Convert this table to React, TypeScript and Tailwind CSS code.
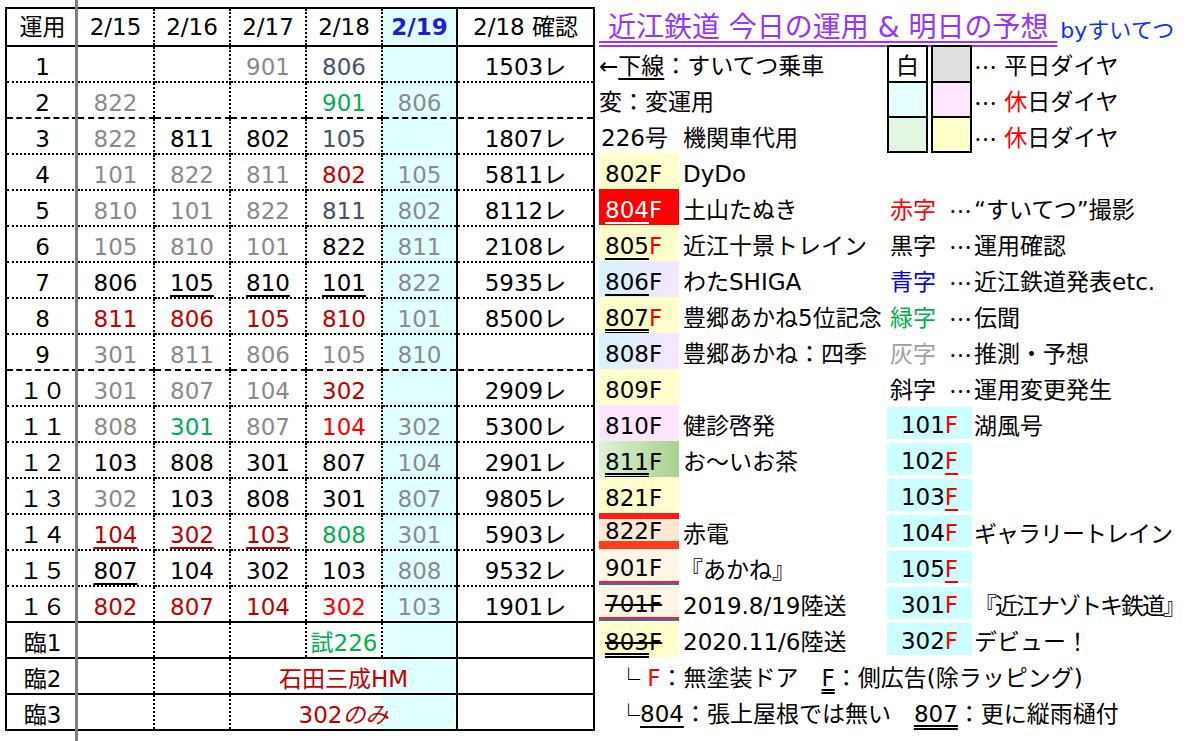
import React from "react";

const JP = "font-['Noto_Sans_CJK_JP',sans-serif]";

const tone: Record<string, string> = {
  g: "text-[#8a8a8a]",
  s: "text-[#44546a]",
  k: "text-black",
  r: "text-[#c00000]",
  R: "text-[#ff0000]",
  n: "text-[#00b050]",
};

// value + colour key + optional underline key (u: black, x: red)
const rows: [string, string[], string][] = [
  ["1", ["", "", "901g", "806s", ""], "1503レ"],
  ["2", ["822g", "", "", "901n", "806g"], ""],
  ["3", ["822g", "811k", "802k", "105s", ""], "1807レ"],
  ["4", ["101g", "822g", "811g", "802r", "105g"], "5811レ"],
  ["5", ["810g", "101g", "822g", "811s", "802g"], "8112レ"],
  ["6", ["105g", "810g", "101g", "822k", "811g"], "2108レ"],
  ["7", ["806k", "105ku", "810ku", "101ku", "822g"], "5935レ"],
  ["8", ["811r", "806r", "105r", "810r", "101g"], "8500レ"],
  ["9", ["301g", "811g", "806g", "105g", "810g"], ""],
  ["１０", ["301g", "807g", "104g", "302r", ""], "2909レ"],
  ["１１", ["808g", "301n", "807g", "104R", "302g"], "5300レ"],
  ["１２", ["103k", "808k", "301k", "807k", "104g"], "2901レ"],
  ["１３", ["302g", "103k", "808k", "301k", "807g"], "9805レ"],
  ["１４", ["104rx", "302rx", "103rx", "808n", "301g"], "5903レ"],
  ["１５", ["807ku", "104k", "302k", "103k", "808g"], "9532レ"],
  ["１６", ["802r", "807r", "104r", "302R", "103g"], "1901レ"],
];

const DOT_R = "border-r-2 border-r-black [border-right-style:dotted]";
const SOL_R = "border-r-2 border-r-black";
const SOL_B = "border-b-2 border-b-black";
const CYAN = "bg-[#e0ffff]";
const TD = "pt-[6px] text-center";

const bottomOf = (i: number) =>
  i === 1 || i === 8
    ? "border-b-2 border-b-black [border-bottom-style:dashed]"
    : i === 15
      ? SOL_B
      : "border-b-2 border-b-black [border-bottom-style:dotted]";

function Num({ code }: { code: string }) {
  if (!code) return null;
  const v = code.slice(0, 3);
  const u = code[4];
  const line =
    u === "u"
      ? "underline decoration-2 underline-offset-[4px] decoration-black"
      : u === "x"
        ? "underline decoration-2 underline-offset-[4px] decoration-[#c00000]"
        : "";
  return <span className={`${tone[code[3]]} ${line}`}>{v}</span>;
}

function OpsTable() {
  return (
    <table className="w-[588px] table-fixed border-collapse border-2 border-black">
      <colgroup>
        <col className="w-[72px]" />
        <col className="w-[76px]" />
        <col className="w-[76px]" />
        <col className="w-[76px]" />
        <col className="w-[76px]" />
        <col className="w-[75px]" />
        <col className="w-[137px]" />
      </colgroup>
      <thead>
        <tr className="h-[38px]">
          <th className={`font-normal ${SOL_B}`}>運用</th>
          <th className={`font-normal ${SOL_B} ${DOT_R}`}>2/15</th>
          <th className={`font-normal ${SOL_B} ${DOT_R}`}>2/16</th>
          <th className={`font-normal ${SOL_B} ${DOT_R}`}>2/17</th>
          <th className={`font-normal ${SOL_B} ${DOT_R}`}>2/18</th>
          <th className={`font-bold text-[#1f1fcc] ${CYAN} ${SOL_B} ${SOL_R}`}>2/19</th>
          <th className={`font-normal ${SOL_B} ${SOL_R}`}>2/18 確認</th>
        </tr>
      </thead>
      <tbody>
        {rows.map(([label, cells, check], i) => (
          <tr key={i} className="h-[36px]">
            <td className={`${TD} ${bottomOf(i)}`}>{label}</td>
            {cells.map((c, j) => (
              <td
                key={j}
                className={`${TD} ${bottomOf(i)} ${j === 4 ? `${SOL_R} ${CYAN}` : DOT_R}`}
              >
                <Num code={c} />
              </td>
            ))}
            <td className={`${TD} ${bottomOf(i)} ${SOL_R}`}>{check}</td>
          </tr>
        ))}
        <tr className="h-[36px]">
          <td className={`${TD} ${SOL_B}`}>臨1</td>
          <td className={`${DOT_R} ${SOL_B}`} />
          <td className={`${DOT_R} ${SOL_B}`} />
          <td className={`${DOT_R} ${SOL_B}`} />
          <td className={`${TD} text-[#00b050] ${DOT_R} ${SOL_B}`}>試226</td>
          <td className={`${CYAN} ${SOL_R} ${SOL_B}`} />
          <td className={`${SOL_R} ${SOL_B}`} />
        </tr>
        <tr className="h-[36px]">
          <td className={`${TD} ${SOL_B}`}>臨2</td>
          <td className={`${DOT_R} ${SOL_B}`} />
          <td className={`${DOT_R} ${SOL_B}`} />
          <td
            colSpan={3}
            className={`${TD} bg-[linear-gradient(to_right,#ffffff_66.6%,#e0ffff_66.6%)] text-[#c00000] ${SOL_R} ${SOL_B}`}
          >
            石田三成HM
          </td>
          <td className={`${SOL_R} ${SOL_B}`} />
        </tr>
        <tr className="h-[36px]">
          <td className={`${TD} ${SOL_B}`}>臨3</td>
          <td className={`${DOT_R} ${SOL_B}`} />
          <td className={`${DOT_R} ${SOL_B}`} />
          <td
            colSpan={3}
            className={`${TD} bg-[linear-gradient(to_right,#ffffff_66.6%,#e0ffff_66.6%)] text-[#c00000] ${SOL_R} ${SOL_B}`}
          >
            302<span className="italic">のみ</span>
          </td>
          <td className={`${SOL_R} ${SOL_B}`} />
        </tr>
      </tbody>
    </table>
  );
}

const Ell = () => <span className={JP}>…</span>;
const U = ({ children, c = "decoration-black" }: { children: React.ReactNode; c?: string }) => (
  <span className={`underline decoration-2 underline-offset-[4px] ${c}`}>{children}</span>
);
const UU = ({ children }: { children: React.ReactNode }) => (
  <span className="underline decoration-double decoration-black underline-offset-[3px]">{children}</span>
);
const RedF = () => <span className="text-[#ff0000]">F</span>;

function RRow({
  f,
  fCls = "",
  name,
  mid,
  tail,
}: {
  f: React.ReactNode;
  fCls?: string;
  name?: React.ReactNode;
  mid?: React.ReactNode;
  tail?: React.ReactNode;
}) {
  return (
    <div className="flex h-[36px] whitespace-nowrap">
      <div className={`flex w-[80px] items-center pl-[6px] pt-[6px] ${fCls}`}>{f}</div>
      <div className="flex w-[208px] items-center pl-[4px] pt-[6px]">{name}</div>
      <div className="flex w-[85px] items-center">{mid}</div>
      <div className="flex flex-1 items-center pl-[2px] pt-[6px]">{tail}</div>
    </div>
  );
}

const Key = ({ label, cls }: { label: string; cls: string }) => (
  <div className="flex w-full items-center justify-between pl-[3px] pt-[6px]">
    <span className={cls}>{label}</span>
    <Ell />
  </div>
);

const Side = ({ children }: { children: React.ReactNode }) => (
  <div className="flex h-[32px] w-full items-center justify-center bg-[#ccffff] pt-[5px]">{children}</div>
);

const LINE = "flex h-[36px] items-center pt-[6px]";

function Legend() {
  return (
    <div className="ml-[4px] w-[603px]">
      <div className="flex h-[38px] items-end whitespace-nowrap pb-[3px]">
        <span className="text-[28px] text-[#9933ff] underline decoration-[#9933ff] decoration-double underline-offset-[4px]">
          {"\u00a0近江鉄道 今日の運用 & 明日の予想\u00a0"}
        </span>
        <span className="pl-[3px] text-[22px] text-[#1030ff]">byすいてつ</span>
      </div>

      <div className="flex whitespace-nowrap">
        <div className="w-[288px]">
          <div className={LINE}>
            ←<U>下線</U>：すいてつ乗車
          </div>
          <div className={LINE}>変：変運用</div>
          <div className={LINE}>
            <span className="w-[84px] pl-[2px]">226号</span>機関車代用
          </div>
        </div>
        <div className="flex h-[108px] w-[85px] gap-[3px]">
          <div className="flex w-[41px] flex-col border-2 border-black">
            <div className="flex h-[34px] items-center justify-center bg-white pt-[5px]">白</div>
            <div className="h-[35px] border-t-2 border-black bg-[#e6ffff]" />
            <div className="h-[35px] border-t-2 border-black bg-[#e2f6e2]" />
          </div>
          <div className="flex w-[41px] flex-col border-2 border-black">
            <div className="h-[34px] bg-[#e0e0e0]" />
            <div className="h-[35px] border-t-2 border-black bg-[#ffe6ff]" />
            <div className="h-[35px] border-t-2 border-black bg-[#ffffcc]" />
          </div>
        </div>
        <div className="pl-[2px]">
          <div className={LINE}>
            <Ell />
            {"\u00a0"}平日ダイヤ
          </div>
          <div className={LINE}>
            <Ell />
            {"\u00a0"}
            <span className="text-[#ff0000]">休</span>日ダイヤ
          </div>
          <div className={LINE}>
            <Ell />
            {"\u00a0"}
            <span className="text-[#ff0000]">休</span>日ダイヤ
          </div>
        </div>
      </div>

      <RRow f="802F" fCls="bg-[#ffffcc]" name="DyDo" />
      <RRow
        f={
          <span className="text-white">
            <U c="decoration-white">804</U>F
          </span>
        }
        fCls="bg-[#ff0000]"
        name="土山たぬき"
        mid={<Key label="赤字" cls="text-[#ff0000]" />}
        tail="“すいてつ”撮影"
      />
      <RRow
        f={
          <>
            <U>805</U>
            <RedF />
          </>
        }
        fCls="bg-[#ffffcc]"
        name="近江十景トレイン"
        mid={<Key label="黒字" cls="text-black" />}
        tail="運用確認"
      />
      <RRow
        f={
          <>
            <U>806</U>F
          </>
        }
        fCls="bg-[linear-gradient(to_right,#d4f4fc,#f7e6ff)]"
        name="わたSHIGA"
        mid={<Key label="青字" cls="text-[#0000ff]" />}
        tail="近江鉄道発表etc."
      />
      <RRow
        f={
          <>
            <UU>807</UU>
            <RedF />
          </>
        }
        fCls="bg-[#ffffcc]"
        name="豊郷あかね5位記念"
        mid={<Key label="緑字" cls="text-[#00b050]" />}
        tail="伝聞"
      />
      <RRow
        f="808F"
        fCls="bg-[linear-gradient(to_right,#d4f4fc,#f7e6ff)]"
        name="豊郷あかね：四季"
        mid={<Key label="灰字" cls="text-[#a0a0a0]" />}
        tail="推測・予想"
      />
      <RRow f="809F" fCls="bg-[#ffffcc]" mid={<Key label="斜字" cls="text-black" />} tail="運用変更発生" />
      <RRow
        f="810F"
        fCls="bg-[#fde6fc]"
        name="健診啓発"
        mid={
          <Side>
            101
            <RedF />
          </Side>
        }
        tail="湖風号"
      />
      <RRow
        f={
          <>
            <UU>811</UU>F
          </>
        }
        fCls="bg-[linear-gradient(to_right,#def2d6,#a9d18e)]"
        name="お～いお茶"
        mid={
          <Side>
            102
            <U c="decoration-[#ff0000]">
              <RedF />
            </U>
          </Side>
        }
      />
      <RRow
        f="821F"
        fCls="bg-[#ffffcc]"
        mid={
          <Side>
            103
            <U c="decoration-[#ff0000]">
              <RedF />
            </U>
          </Side>
        }
      />
      <RRow
        f="822F"
        fCls="border-t-[6px] border-b-[8px] border-t-[#ff1a1a] border-b-[#ff3d1f] bg-[#fde9d3] !pt-[2px]"
        name="赤電"
        mid={
          <Side>
            104
            <RedF />
          </Side>
        }
        tail={<span className="tracking-[-1px]">ギャラリートレイン</span>}
      />
      <RRow
        f={
          <div className="flex h-full w-full items-center border-b-2 border-b-[#ff2020] pl-[6px]">901F</div>
        }
        fCls="!pl-0 border-b-2 border-b-[#2f6fc0] bg-[#fff6e8]"
        name={<span className="-ml-[3px]">『あかね』</span>}
        mid={
          <Side>
            105
            <U c="decoration-[#ff0000]">
              <RedF />
            </U>
          </Side>
        }
      />
      <RRow
        f={
          <div className="flex h-full w-full items-center border-b-2 border-b-[#ff2020] pl-[6px]">
            <span className="line-through">701F</span>
          </div>
        }
        fCls="!pl-0 border-b-2 border-b-[#2f6fc0] bg-[#fff6e8]"
        name="2019.8/19陸送"
        mid={
          <Side>
            301
            <RedF />
          </Side>
        }
        tail={<span className="tracking-[-2px]">『近江ナゾトキ鉄道』</span>}
      />
      <RRow
        f={
          <span className="line-through">
            <UU>803</UU>F
          </span>
        }
        fCls="bg-[#ffffcc]"
        name="2020.11/6陸送"
        mid={
          <Side>
            302
            <RedF />
          </Side>
        }
        tail="デビュー！"
      />
      <div className={`${LINE} whitespace-nowrap pl-[18px]`}>
        <span className={JP}>└</span>
        {"\u00a0"}
        <RedF />
        ：無塗装ドア　<UU>F</UU>：側広告(除ラッピング)
      </div>
      <div className={`${LINE} whitespace-nowrap pl-[18px]`}>
        <span className={JP}>└</span>
        <U>804</U>：張上屋根では無い　<UU>807</UU>：更に縦雨樋付
      </div>
    </div>
  );
}

export default function App() {
  return (
    <div className="relative h-[741px] w-[1200px] overflow-hidden bg-white font-['DejaVu_Sans','Noto_Sans_CJK_JP',sans-serif] text-[23px] leading-none text-black">
      <div className="flex pl-[5px] pt-[7px]">
        <OpsTable />
        <Legend />
      </div>
      <div className="absolute bottom-0 left-[75px] top-0 w-[3px] bg-[#7f7f7f]" />
    </div>
  );
}
